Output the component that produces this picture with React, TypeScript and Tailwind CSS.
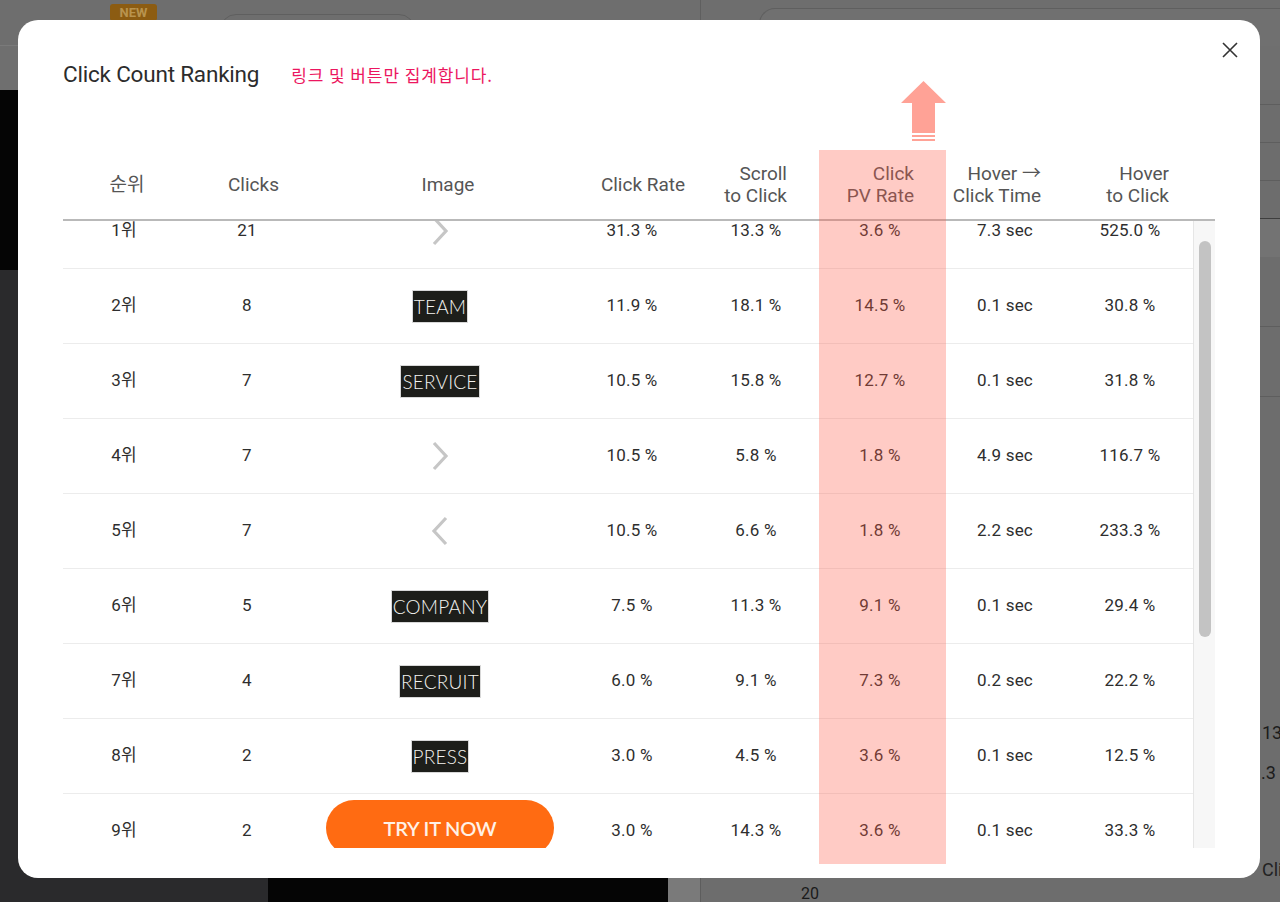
import React from "react";

type Img =
  | { kind: "chevR" }
  | { kind: "chevL" }
  | { kind: "label"; text: string }
  | { kind: "btn" };

const rows: { rank: string; clicks: string; img: Img; vals: string[] }[] = [
  { rank: "1위", clicks: "21", img: { kind: "chevR" }, vals: ["31.3 %", "13.3 %", "3.6 %", "7.3 sec", "525.0 %"] },
  { rank: "2위", clicks: "8", img: { kind: "label", text: "TEAM" }, vals: ["11.9 %", "18.1 %", "14.5 %", "0.1 sec", "30.8 %"] },
  { rank: "3위", clicks: "7", img: { kind: "label", text: "SERVICE" }, vals: ["10.5 %", "15.8 %", "12.7 %", "0.1 sec", "31.8 %"] },
  { rank: "4위", clicks: "7", img: { kind: "chevR" }, vals: ["10.5 %", "5.8 %", "1.8 %", "4.9 sec", "116.7 %"] },
  { rank: "5위", clicks: "7", img: { kind: "chevL" }, vals: ["10.5 %", "6.6 %", "1.8 %", "2.2 sec", "233.3 %"] },
  { rank: "6위", clicks: "5", img: { kind: "label", text: "COMPANY" }, vals: ["7.5 %", "11.3 %", "9.1 %", "0.1 sec", "29.4 %"] },
  { rank: "7위", clicks: "4", img: { kind: "label", text: "RECRUIT" }, vals: ["6.0 %", "9.1 %", "7.3 %", "0.2 sec", "22.2 %"] },
  { rank: "8위", clicks: "2", img: { kind: "label", text: "PRESS" }, vals: ["3.0 %", "4.5 %", "3.6 %", "0.1 sec", "12.5 %"] },
  { rank: "9위", clicks: "2", img: { kind: "btn" }, vals: ["3.0 %", "14.3 %", "3.6 %", "0.1 sec", "33.3 %"] },
];

const GRID = "grid grid-cols-[122px_124px_262px_122px_126px_122px_128px_122px]";

function ImageCell({ img }: { img: Img }) {
  if (img.kind === "chevR" || img.kind === "chevL") {
    return (
      <svg width="20" height="30" viewBox="0 0 20 30" className="block">
        <polyline
          points={img.kind === "chevR" ? "4,2 16,15 4,28" : "16,2 4,15 16,28"}
          fill="none"
          stroke="#c6c6c6"
          strokeWidth="3.2"
        />
      </svg>
    );
  }
  if (img.kind === "btn") {
    return (
      <div className="mt-[6px] self-start flex h-[56px] w-[228px] items-center justify-center rounded-full bg-[#ff6b12] font-['Lato',sans-serif] text-[20px] font-semibold tracking-[-0.2px] text-[#fff1e6]">
        TRY IT NOW
      </div>
    );
  }
  return (
    <div className="flex h-[31px] items-center bg-[#1d1e1a] px-[1px] font-['Lato',sans-serif] text-[19px] font-light leading-none text-[#f4f4f0] shadow-[0_0_0_1px_#d8d8d8]">
      {img.text}
    </div>
  );
}

function Backdrop() {
  return (
    <div className="flex h-[902px] w-[1280px] flex-col bg-[#6d6d6d]">
      <div className="flex h-[46px] items-start border-b border-[#7a7a7a] bg-[#6e6e6e]">
        <div className="ml-[110px] mt-[4px] flex h-[17px] w-[47px] items-center justify-center rounded-[3px] bg-[#8c5c12] font-['Roboto',sans-serif] text-[13px] font-bold text-[#b8934e]">
          NEW
        </div>
        <div className="ml-[63px] mt-[14px] h-[40px] w-[195px] rounded-t-[16px] border border-[#5f5f5f]" />
        <div className="ml-[285px] mt-0 h-[46px] w-px bg-[#5f5f5f]" />
        <div className="ml-[58px] mt-[8px] h-[40px] flex-1 rounded-tl-[16px] border-l border-t border-[#5f5f5f] bg-[#707070]" />
      </div>
      <div className="flex h-[44px] bg-[#6f6f6f]" />
      <div className="flex flex-1">
        <div className="flex w-[268px] flex-col bg-[#1b1b1d]">
          <div className="h-[180px] bg-[#050505]" />
          <div className="flex-1 bg-[#2a2a2c]" />
        </div>
        <div className="flex w-[400px] flex-col bg-[#2a2a2c]">
          <div className="flex-1" />
          <div className="h-[24px] bg-[#050505]" />
        </div>
        <div className="flex flex-1 flex-col bg-[#6d6d6d]">
          <div className="flex-1" />
          <div className="flex h-[24px]">
            <div className="w-[32px] bg-[#7a7a7a]" />
            <div className="flex-1 border-l border-[#5d5d5d] pl-[100px] pt-[8px] font-['Roboto',sans-serif] text-[16px] leading-none text-[#1a1a1a]">
              20
            </div>
          </div>
        </div>
      </div>
    </div>
  );
}

function RightEdge() {
  return (
    <div className="absolute left-[1260px] top-[60px] flex h-[842px] w-[20px] flex-col overflow-hidden font-['Roboto',sans-serif] text-[18px] leading-[18px] text-[#1c1c1c]">
      <div className="h-[45px] shrink-0 border-b border-[#5e5e5e]" />
      <div className="h-[38px] shrink-0 border-b border-[#5e5e5e]" />
      <div className="h-[38px] shrink-0 border-b border-[#5e5e5e]" />
      <div className="h-[38px] shrink-0 border-b border-[#3e3e3e]" />
      <div className="h-[38px] shrink-0 bg-[#737373]" />
      <div className="h-[70px] shrink-0 border-b border-[#5e5e5e]" />
      <div className="h-[70px] shrink-0 border-b border-[#5e5e5e]" />
      <div className="h-[327px] shrink-0" />
      <div className="h-[40px] shrink-0 whitespace-nowrap pl-[2px]">13</div>
      <div className="h-[97px] shrink-0 whitespace-nowrap pl-[1px]">.3</div>
      <div className="h-[30px] shrink-0 whitespace-nowrap pl-[2px] text-[#222]">Clic</div>
    </div>
  );
}

export default function App() {
  return (
    <div className="relative h-[902px] w-[1280px] overflow-hidden font-['Roboto','Noto_Sans_CJK_KR',sans-serif]">
      <Backdrop />
      <RightEdge />

      {/* Modal */}
      <div className="absolute left-[18px] top-[20px] flex h-[858px] w-[1242px] flex-col rounded-[20px] bg-white px-[45px] pt-[40px]">
        {/* close */}
        <svg className="absolute right-[22px] top-[22px]" width="16" height="16" viewBox="0 0 16 16">
          <path d="M1 1 L15 15 M15 1 L1 15" stroke="#333" strokeWidth="1.6" />
        </svg>

        {/* annotation arrow */}
        <svg className="absolute left-[883px] top-[61px]" width="45" height="60" viewBox="0 0 45 60">
          <polygon points="22.5,0 45,22 34,22 34,52 11,52 11,22 0,22" fill="#ffa296" />
          <rect x="11" y="54" width="23" height="2" fill="#ffa296" />
          <rect x="11" y="58" width="23" height="2" fill="#ffa296" />
        </svg>

        {/* title */}
        <div className="flex h-[30px] items-center">
          <span className="text-[22.5px] text-[#2c2c2c] tracking-[-0.2px]">Click Count Ranking</span>
          <span className="ml-[32px] font-['Noto_Sans_CJK_KR',sans-serif] text-[17px] text-[#ec1660] tracking-[0.9px]">
            링크 및 버튼만 집계합니다.
          </span>
        </div>

        {/* table */}
        <div className="relative mt-[60px] flex flex-col">
          {/* header */}
          <div className={`${GRID} h-[71px] items-center border-b-2 border-[#b9b9b9] text-[19px] leading-[22px] text-[#555]`}>
            <div className="pl-[6px] text-center">순위</div>
            <div className="pl-[13px] text-center">Clicks</div>
            <div className="pl-[16px] text-center">Image</div>
            <div className="pl-[22px] text-center">Click Rate</div>
            <div className="pr-[32px] text-right">Scroll<br />to Click</div>
            <div className="pr-[27px] text-right">Click<br />PV Rate</div>
            <div className="pr-[28px] text-right">Hover →<br />Click Time</div>
            <div className="pr-[22px] text-right">Hover<br />to Click</div>
          </div>

          {/* body */}
          <div className="flex h-[627px]">
            <div className="h-full flex-1 overflow-hidden">
              <div className="-mt-[27px] flex flex-col">
                {rows.map((r, i) => (
                  <div
                    key={i}
                    className={`${GRID} h-[75px] items-center border-b border-[#ececec] text-[17px] tracking-[0.2px] text-[#2e2e2e]`}
                  >
                    <div className="text-center">{r.rank}</div>
                    <div className="text-center">{r.clicks}</div>
                    <div className="flex h-full items-center justify-center">
                      <ImageCell img={r.img} />
                    </div>
                    {r.vals.map((v, j) => (
                      <div key={j} className="text-center">
                        {v}
                      </div>
                    ))}
                  </div>
                ))}
              </div>
            </div>
            {/* scrollbar */}
            <div className="flex w-[22px] flex-col border-l border-[#e6e6e6] bg-[#f7f7f7] pl-[5px] pt-[20px]">
              <div className="h-[396px] w-[12px] rounded-full bg-[#c3c3c3]" />
            </div>
          </div>

          {/* highlighted column overlay */}
          <div className="pointer-events-none absolute left-[756px] top-0 h-[714px] w-[127px] bg-[rgba(255,90,70,0.315)]" />
        </div>
      </div>
    </div>
  );
}
